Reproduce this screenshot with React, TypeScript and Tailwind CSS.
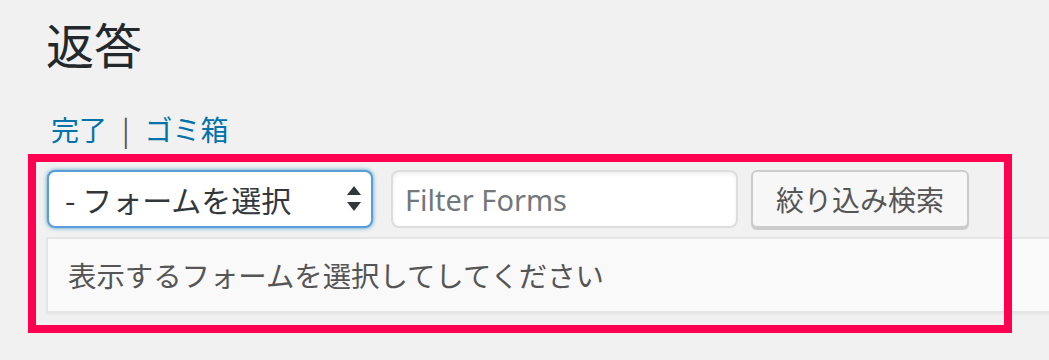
const jp = "font-['Noto_Sans_CJK_JP','Noto_Sans',sans-serif]";

function SortArrows() {
  return (
    <svg width="14" height="26" viewBox="0 0 14 26" className="shrink-0">
      <path d="M7 0 L14 9 L0 9 Z" fill="#32373c" />
      <path d="M0 16 L14 16 L7 25 Z" fill="#32373c" />
    </svg>
  );
}

export default function App() {
  return (
    <div className={`relative h-[360px] w-full overflow-hidden bg-[#f1f1f1] ${jp}`}>
      <div className="pl-[46px] pt-[12px]">
        <h1 className="text-[48px] leading-[62px] font-normal text-[#23282d]">返答</h1>

        <div className="mt-[37px] flex items-center pl-[5px] text-[28px] leading-[36px]">
          <a href="#" className="text-[#0073aa]">完了</a>
          <span className="mx-[15px] text-[#555]">|</span>
          <a href="#" className="text-[#0073aa]">ゴミ箱</a>
        </div>

        <div className="mt-[23px] flex items-start pl-px">
          <div className="flex h-[58px] w-[326px] items-center justify-between rounded-[8px] border-2 border-[#5b9dd9] bg-white pl-[16px] pr-[10px] shadow-[0_0_4px_rgba(30,140,190,0.8)]">
            <span className="text-[30px] leading-none text-[#32373c]">- フォームを選択</span>
            <SortArrows />
          </div>
          <div className="ml-[18px] flex h-[58px] w-[347px] items-center rounded-[8px] border-2 border-[#ddd] bg-white pl-[12px] shadow-[inset_0_2px_4px_rgba(0,0,0,0.07)]">
            <span className="font-['Noto_Sans',sans-serif] text-[29px] leading-none text-[#72777c]">
              Filter Forms
            </span>
          </div>
          <button
            type="button"
            className="ml-[13px] flex h-[58px] w-[218px] items-center justify-center rounded-[6px] border-2 border-[#ccc] bg-[#f7f7f7] text-[28px] leading-none text-[#555] shadow-[0_2px_0_#ccc]"
          >
            絞り込み検索
          </button>
        </div>

        <div className="mt-[9px] flex h-[76px] w-[1100px] items-center border-2 border-[#e5e5e5] bg-[#f9f9f9] pl-[20px] shadow-[0_2px_2px_rgba(0,0,0,0.04)]">
          <span className="text-[28.4px] leading-none text-[#555]">表示するフォームを選択してしてください</span>
        </div>
      </div>

      <div className="pointer-events-none absolute left-[28px] top-[154px] h-[179px] w-[984px] border-[8px] border-[#ff0050]" />
    </div>
  );
}
